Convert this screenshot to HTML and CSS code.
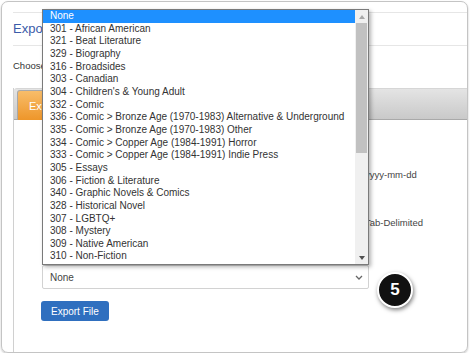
FILE: index.html
```html
<!DOCTYPE html>
<html lang="en">
<head>
    <meta charset="UTF-8">
    <meta name="viewport" content="width=device-width, initial-scale=1.0">
    <title>Export Inventory</title>
    <link rel="stylesheet" href="styles.css">
</head>
<body>

    <div class="frame">
        <div class="rule"></div>
        <h2 class="title">Export Inventory</h2>
        <div class="rule"></div>
        <p class="intro">Choose the options below, then click Export File.</p>

        <div class="tabs">
            <div class="tab-bar">
                <span class="tab">Export</span>
            </div>
            <div class="tab-body">
                <div class="opt"><span class="opt-label">Dates are written in the format</span><span>yyyy-mm-dd</span></div>
                <div class="opt opt-second"><span class="opt-label">File type: Comma-Separated or</span><span>Tab-Delimited</span></div>
                <div class="select">
                    <span>None</span>
                    <svg width="8" height="5" viewBox="0 0 8 5"><polyline points="1,1 4,4 7,1" fill="none" stroke="#666" stroke-width="1.3"/></svg>
                </div>
                <button class="btn">Export File</button>
            </div>
        </div>

        <div class="dropdown">
            <ul class="options">
                <li class="selected">None</li>
                <li>301 - African American</li>
                <li>321 - Beat Literature</li>
                <li>329 - Biography</li>
                <li>316 - Broadsides</li>
                <li>303 - Canadian</li>
                <li>304 - Children's &amp; Young Adult</li>
                <li>332 - Comic</li>
                <li>336 - Comic &gt; Bronze Age (1970-1983) Alternative &amp; Underground</li>
                <li>335 - Comic &gt; Bronze Age (1970-1983) Other</li>
                <li>334 - Comic &gt; Copper Age (1984-1991) Horror</li>
                <li>333 - Comic &gt; Copper Age (1984-1991) Indie Press</li>
                <li>305 - Essays</li>
                <li>306 - Fiction &amp; Literature</li>
                <li>340 - Graphic Novels &amp; Comics</li>
                <li>328 - Historical Novel</li>
                <li>307 - LGBTQ+</li>
                <li>308 - Mystery</li>
                <li>309 - Native American</li>
                <li>310 - Non-Fiction</li>
            </ul>
            <div class="scrollbar">
                <div class="arrow">
                    <svg width="6" height="4" viewBox="0 0 6 4"><polygon points="0,4 3,0 6,4" fill="#a8a8a8"/></svg>
                </div>
                <div class="track"><div class="thumb"></div></div>
                <div class="arrow">
                    <svg width="6" height="4" viewBox="0 0 6 4"><polygon points="0,0 6,0 3,4" fill="#505050"/></svg>
                </div>
            </div>
        </div>

        <div class="badge">5</div>
    </div>

</body>
</html>
```

FILE: styles.css
```css
body {
    margin: 0;
    background: #fff;
    font-family: "Liberation Sans", Arial, sans-serif;
    color: #444;
}
.frame {
    position: relative;
    box-sizing: border-box;
    height: 352px;
    margin: 1px 3px 0 1px;
    padding: 10px 0 0 11px;
    border: 1px solid #c4c4c4;
    border-radius: 7px;
    box-shadow: 0 1px 2px rgba(0,0,0,0.25);
    overflow: hidden;
}
.rule {
    height: 1px;
    background: #e6e6e6;
}
.title {
    margin: 0;
    height: 32px;
    line-height: 32px;
    font-size: 13px;
    font-weight: normal;
    color: #3b5ba9;
}
.intro {
    margin: 14px 0 16px;
    line-height: 12px;
    font-size: 9.5px;
    color: #333;
}
.tabs {
    margin-right: -6px;
    height: 300px;
    border-left: 1px solid #d0d0d0;
}
.tab-bar {
    display: flex;
    align-items: flex-end;
    box-sizing: border-box;
    height: 32px;
    padding-left: 3px;
    border-top: 1px solid #d6d6d6;
    border-bottom: 1px solid #a9a9a9;
    border-top-left-radius: 3px;
    background: linear-gradient(#e4e4e4, #c9c9c9);
}
.tab {
    box-sizing: border-box;
    height: 30px;
    margin-bottom: -1px;
    padding: 0 14px 0 11px;
    line-height: 30px;
    font-size: 11px;
    color: #fff;
    border: 1px solid #a8a8a8;
    border-bottom: none;
    border-radius: 3px 3px 0 0;
    background: linear-gradient(#f8bd6a, #ee962a);
}
.tab-body {
    padding: 48px 0 0 28px;
}
.opt {
    display: grid;
    grid-template-columns: 323px auto;
    line-height: 14px;
    font-size: 9.5px;
    white-space: nowrap;
}
.opt-label {
    overflow: hidden;
}
.opt-second {
    margin-top: 34px;
}
.select {
    display: flex;
    align-items: center;
    justify-content: space-between;
    box-sizing: border-box;
    width: 327px;
    height: 24px;
    margin-top: 35px;
    padding: 0 5px 0 7px;
    border: 1px solid #d2d2d2;
    border-radius: 2px;
    font-size: 10px;
    color: #444;
}
.btn {
    display: block;
    height: 20px;
    margin: 12px 0 0 -1px;
    padding: 0 10px;
    border: none;
    border-radius: 3px;
    background: #2f6fbf;
    color: #fff;
    font-family: inherit;
    font-size: 10px;
}
.dropdown {
    position: absolute;
    left: 40px;
    top: 7px;
    display: flex;
    width: 327px;
    height: 256px;
    box-sizing: border-box;
    border: 1px solid #7a7a7a;
    background: #fff;
    box-shadow: 2px 2px 4px rgba(0,0,0,0.3);
}
.options {
    flex: 1;
    margin: 0;
    padding: 0;
    list-style: none;
    font-size: 10px;
    color: #333;
    overflow: hidden;
}
.options li {
    height: 12.67px;
    line-height: 12.67px;
    padding-left: 7px;
    white-space: nowrap;
}
.options .selected {
    background: #1e90ff;
    color: #fff;
}
.scrollbar {
    display: flex;
    flex-direction: column;
    width: 13px;
    background: #f0f0f0;
}
.arrow {
    display: flex;
    align-items: center;
    justify-content: center;
    height: 13px;
}
.track {
    flex: 1;
}
.thumb {
    width: 11px;
    height: 130px;
    margin-left: 1px;
    background: #c1c1c1;
}
.badge {
    position: absolute;
    left: 375px;
    top: 270px;
    width: 32px;
    height: 32px;
    border: 2px solid #fff;
    border-radius: 50%;
    background: #111;
    color: #fff;
    font-size: 17px;
    font-weight: bold;
    line-height: 32px;
    text-align: center;
    box-shadow: 1px 2px 4px rgba(0,0,0,0.5);
}
```
